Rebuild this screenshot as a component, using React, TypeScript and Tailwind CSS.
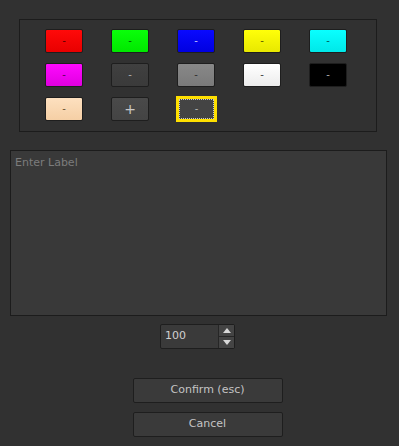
import React from "react";

type Swatch = { bg: string; text: string; label: string; selected?: boolean };

const swatches: Swatch[] = [
  { bg: "bg-gradient-to-b from-[#ff0a0a] to-[#e80000]", text: "text-[#5a0000]", label: "-" },
  { bg: "bg-gradient-to-b from-[#0aff0a] to-[#00e800]", text: "text-[#005a00]", label: "-" },
  { bg: "bg-gradient-to-b from-[#0a0aff] to-[#0000e0]", text: "text-[#c0c0ff]", label: "-" },
  { bg: "bg-gradient-to-b from-[#ffff0a] to-[#e8e800]", text: "text-[#5a5a00]", label: "-" },
  { bg: "bg-gradient-to-b from-[#0affff] to-[#00e8e8]", text: "text-[#005a5a]", label: "-" },
  { bg: "bg-gradient-to-b from-[#ff0aff] to-[#e000e0]", text: "text-[#5a005a]", label: "-" },
  { bg: "bg-gradient-to-b from-[#404040] to-[#3a3a3a]", text: "text-[#b0b0b0]", label: "-" },
  { bg: "bg-gradient-to-b from-[#888888] to-[#7a7a7a]", text: "text-[#303030]", label: "-" },
  { bg: "bg-gradient-to-b from-[#ffffff] to-[#ececec]", text: "text-[#404040]", label: "-" },
  { bg: "bg-[#000000]", text: "text-[#b0b0b0]", label: "-" },
  { bg: "bg-gradient-to-b from-[#fde0bf] to-[#f5cfa5]", text: "text-[#6a5030]", label: "-" },
  { bg: "bg-gradient-to-b from-[#4a4a4a] to-[#444444]", text: "text-[#c8c8c8]", label: "+" },
  { bg: "bg-[#444444]", text: "text-[#b0b0b0]", label: "-", selected: true },
];

function SwatchButton({ s }: { s: Swatch }) {
  if (s.selected) {
    return (
      <div className="-ml-[1px] -mt-[1px] h-[26px] w-[41px] border-[3px] border-[#ffe000]">
        <div className={`flex h-full w-full items-center justify-center border border-dotted border-[#c8c8c8] text-[10px] leading-none ${s.bg} ${s.text}`}>
          {s.label}
        </div>
      </div>
    );
  }
  return (
    <div
      className={`flex h-[24px] w-[38px] items-center justify-center rounded-[2px] border border-[#1e1e1e] leading-none ${
        s.label === "+" ? "text-[14px]" : "text-[10px]"
      } ${s.bg} ${s.text}`}
    >
      {s.label}
    </div>
  );
}

export default function App() {
  return (
    <div
      className="h-[446px] w-[399px] overflow-hidden bg-[#313131] text-[11px] text-[#c8c8c8]"
      style={{ fontFamily: '"DejaVu Sans", sans-serif' }}
    >
      {/* Colour picker */}
      <div className="ml-[19px] mt-[19px] h-[113px] w-[358px] border border-[#1c1c1c] pl-[25px] pt-[9px]">
        <div className="grid grid-cols-[repeat(5,38px)] gap-x-[28px] gap-y-[10px]">
          {swatches.map((s, i) => (
            <SwatchButton key={i} s={s} />
          ))}
        </div>
      </div>

      {/* Label */}
      <div className="ml-[10px] mt-[18px] h-[166px] w-[377px] border border-[#1c1c1c] bg-[#393939] px-[4px] pt-[4px] text-[#7c7c7c]">
        Enter Label
      </div>

      {/* Spin box */}
      <div className="mt-[8px] flex justify-center">
        <div className="ml-[-4px] flex h-[25px] w-[75px] rounded-[2px] border border-[#1e1e1e] bg-[#3a3a3a]">
          <div className="flex flex-1 items-center pl-[4px] text-[#d0d0d0]">100</div>
          <div className="flex w-[16px] flex-col border-l border-[#262626]">
            <div className="flex flex-1 items-center justify-center border-b border-[#262626] bg-[#444444]">
              <svg width="8" height="5" viewBox="0 0 8 5">
                <path d="M0 5 L4 0 L8 5 Z" fill="#d8d8d8" />
              </svg>
            </div>
            <div className="flex flex-1 items-center justify-center bg-[#444444]">
              <svg width="8" height="5" viewBox="0 0 8 5">
                <path d="M0 0 L4 5 L8 0 Z" fill="#d8d8d8" />
              </svg>
            </div>
          </div>
        </div>
      </div>

      {/* Actions */}
      <div className="mt-[29px] flex flex-col items-center gap-[9px] pl-[16px]">
        <button className="flex h-[25px] w-[150px] items-center justify-center rounded-[2px] border border-[#1e1e1e] bg-[#3a3a3a] text-[#c4c4c4]">
          Confirm (esc)
        </button>
        <button className="flex h-[25px] w-[150px] items-center justify-center rounded-[2px] border border-[#1e1e1e] bg-[#3a3a3a] text-[#c4c4c4]">
          Cancel
        </button>
      </div>
    </div>
  );
}
